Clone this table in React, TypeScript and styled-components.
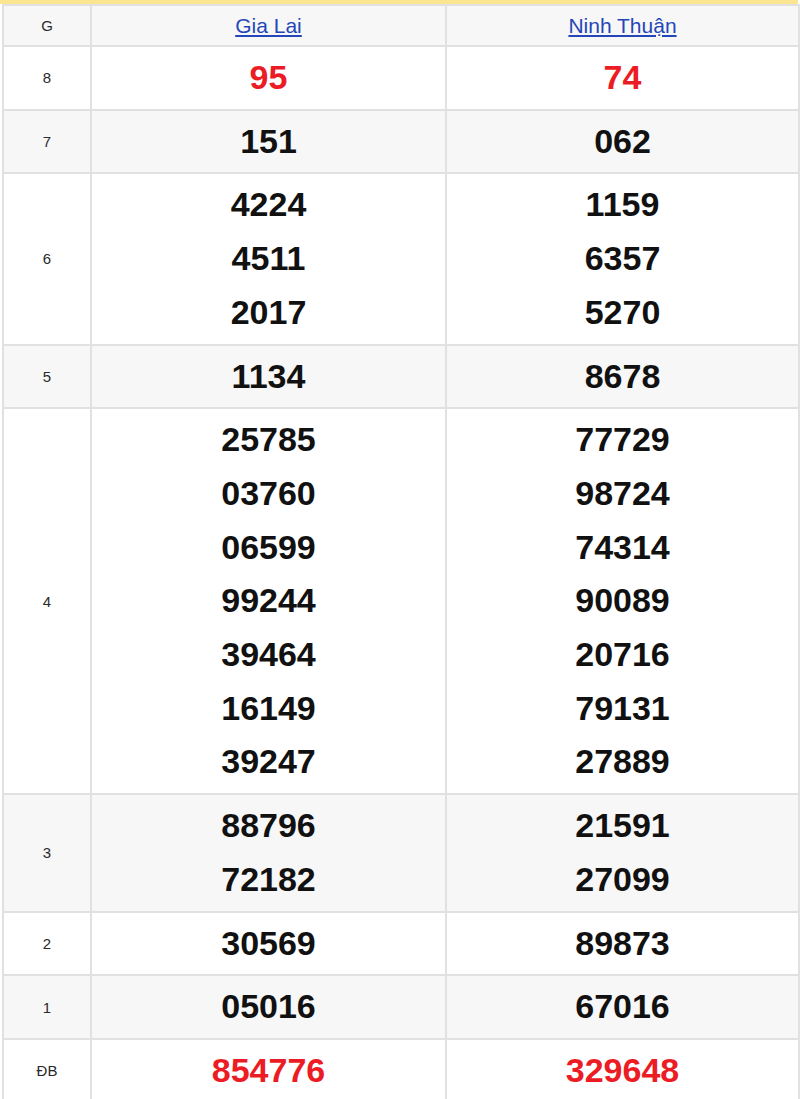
import React from "react";
import styled, { createGlobalStyle } from "styled-components";

const GlobalStyle = createGlobalStyle`
  html, body {
    margin: 0;
    padding: 0;
    background: #ffffff;
    font-family: "Liberation Sans", Arial, sans-serif;
  }
`;

const Wrapper = styled.div`
  width: 798px;
  border-top: 4px solid #fce590;
  padding-left: 2px;
  box-sizing: border-box;
`;

const Table = styled.table`
  width: 796px;
  border-collapse: collapse;
  table-layout: fixed;
`;

const HeadRow = styled.tr`
  background: #f7f7f7;
`;

const Row = styled.tr<{ $alt: boolean }>`
  background: ${(p) => (p.$alt ? "#f7f7f7" : "#ffffff")};
`;

const Cell = styled.td`
  border: 2px solid #e1e1e3;
  text-align: center;
  vertical-align: middle;
  padding: 0;
`;

const HeadCell = styled(Cell)`
  height: 41px;
  box-sizing: border-box;
  font-weight: normal;
`;

const LabelCell = styled(Cell)`
  width: 86px;
  font-size: 15px;
  color: #2a2a2a;
`;

const LabelText = styled.span`
  font-size: 15px;
  font-weight: normal;
  color: #2a2a2a;
`;

const ProvinceLink = styled.a`
  font-size: 21px;
  font-weight: normal;
  color: #2446b8;
  text-decoration: underline;
  cursor: pointer;
`;

const NumCell = styled(Cell)`
  padding: 4px 0;
`;

const Num = styled.div<{ $red: boolean }>`
  font-size: 34px;
  font-weight: bold;
  line-height: 53.7px;
  color: ${(p) => (p.$red ? "#ec1c24" : "#111111")};
`;

type Prize = { label: string; a: string[]; b: string[]; red?: boolean };

const prizes: Prize[] = [
  { label: "8", a: ["95"], b: ["74"], red: true },
  { label: "7", a: ["151"], b: ["062"] },
  { label: "6", a: ["4224", "4511", "2017"], b: ["1159", "6357", "5270"] },
  { label: "5", a: ["1134"], b: ["8678"] },
  {
    label: "4",
    a: ["25785", "03760", "06599", "99244", "39464", "16149", "39247"],
    b: ["77729", "98724", "74314", "90089", "20716", "79131", "27889"],
  },
  { label: "3", a: ["88796", "72182"], b: ["21591", "27099"] },
  { label: "2", a: ["30569"], b: ["89873"] },
  { label: "1", a: ["05016"], b: ["67016"] },
  { label: "ĐB", a: ["854776"], b: ["329648"], red: true },
];

export default function App() {
  return (
    <>
      <GlobalStyle />
      <Wrapper>
        <Table>
          <colgroup>
            <col style={{ width: 88 }} />
            <col style={{ width: 355 }} />
            <col style={{ width: 353 }} />
          </colgroup>
          <thead>
            <HeadRow>
              <HeadCell as="th">
                <LabelText>G</LabelText>
              </HeadCell>
              <HeadCell as="th">
                <ProvinceLink>Gia Lai</ProvinceLink>
              </HeadCell>
              <HeadCell as="th">
                <ProvinceLink>Ninh Thuận</ProvinceLink>
              </HeadCell>
            </HeadRow>
          </thead>
          <tbody>
            {prizes.map((p, i) => (
              <Row key={p.label} $alt={i % 2 === 1}>
                <LabelCell>{p.label}</LabelCell>
                <NumCell>
                  {p.a.map((n) => (
                    <Num key={n} $red={!!p.red}>
                      {n}
                    </Num>
                  ))}
                </NumCell>
                <NumCell>
                  {p.b.map((n) => (
                    <Num key={n} $red={!!p.red}>
                      {n}
                    </Num>
                  ))}
                </NumCell>
              </Row>
            ))}
          </tbody>
        </Table>
      </Wrapper>
    </>
  );
}
